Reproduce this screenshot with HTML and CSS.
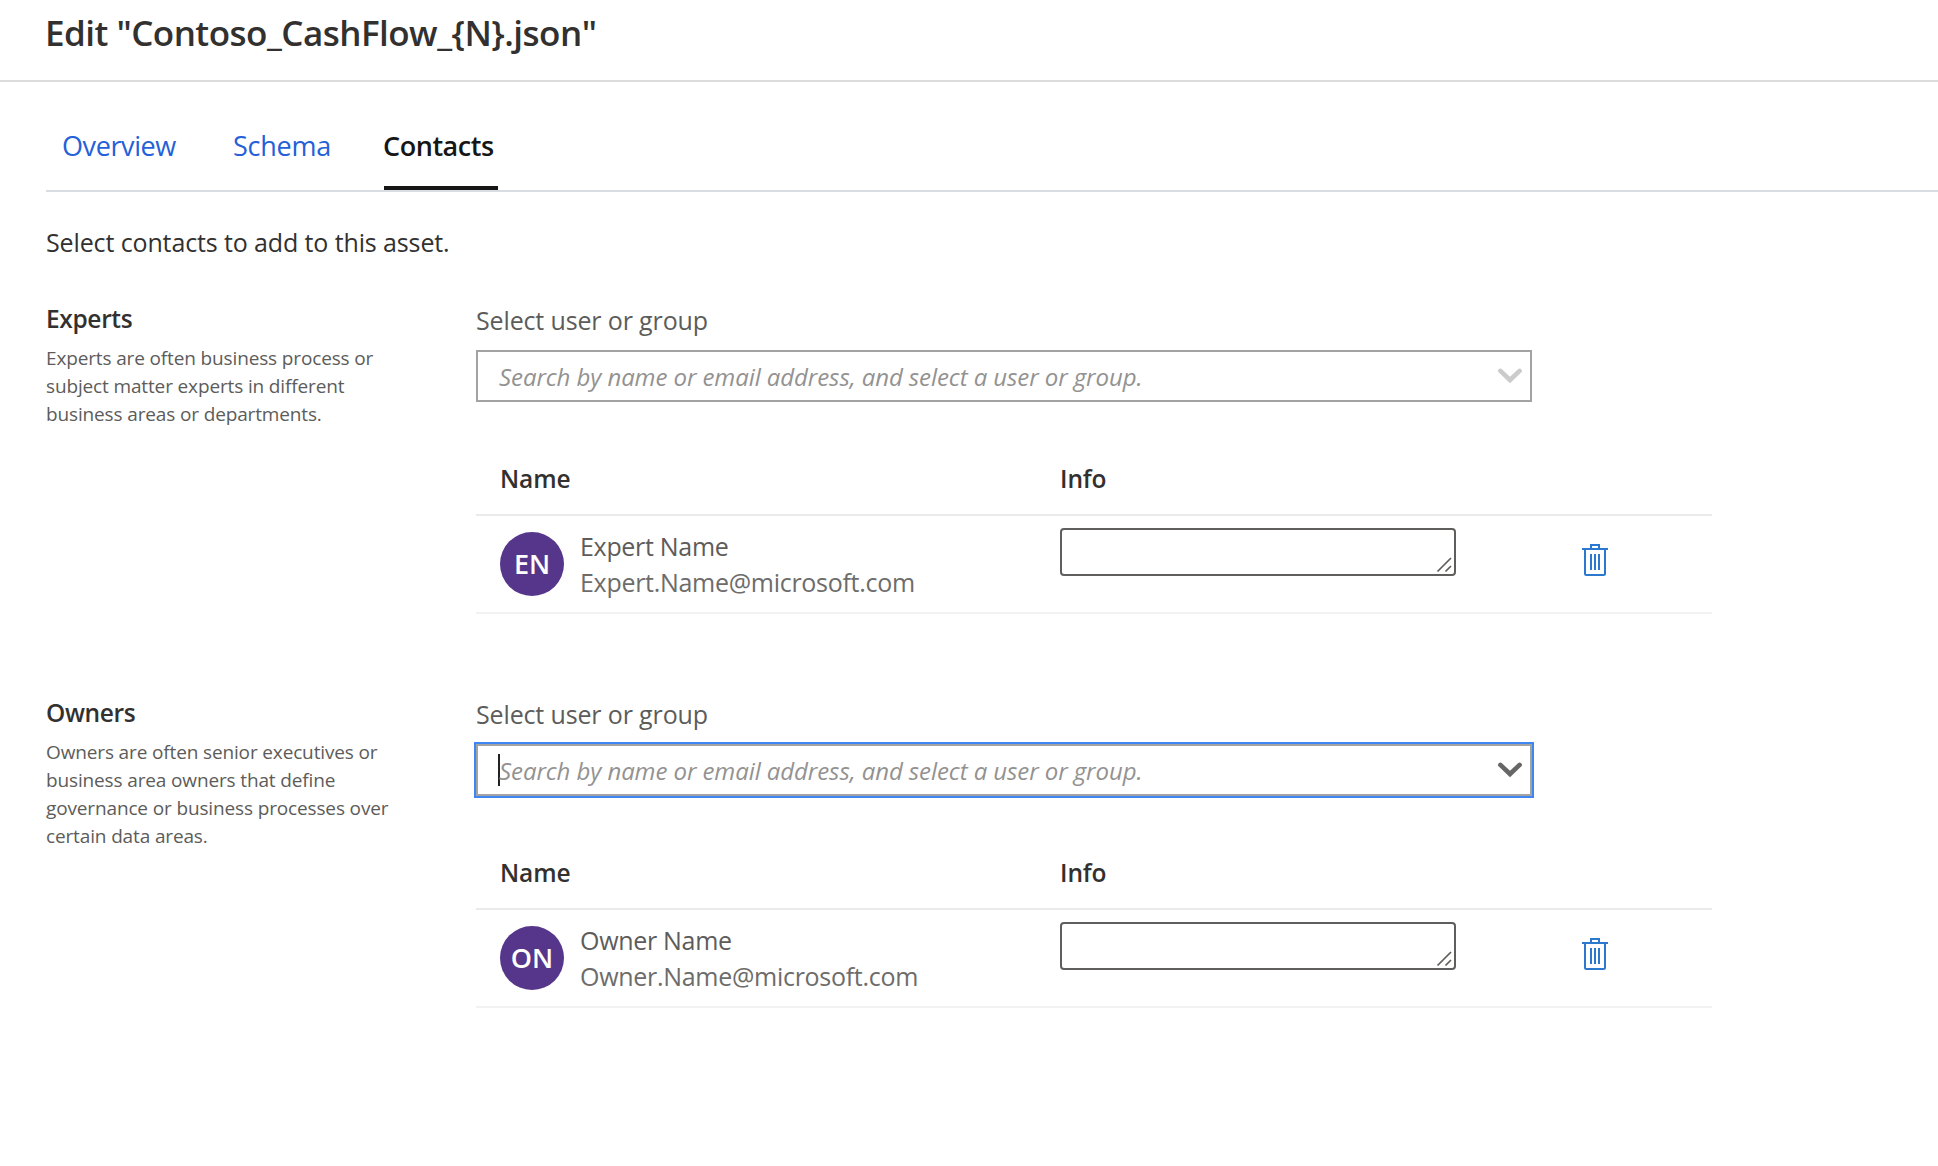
FILE: index.html
```html
<!DOCTYPE html>
<html lang="en">
<head>
<meta charset="utf-8">
<title>Edit asset</title>
<link rel="stylesheet" href="styles.css">
</head>
<body>
<svg class="sprite" aria-hidden="true">
  <symbol id="chevron" viewBox="0 0 24 16"><path d="M2.4 2.9 12 12 21.6 2.9" fill="none" stroke="currentColor" stroke-width="4.6" stroke-linecap="round"/></symbol>
  <symbol id="trash" viewBox="0 0 26 32"><path d="M0 5H26M9 5V1H17V5M3 5V29.5Q3 31 4.5 31H21.5Q23 31 23 29.5V5M9 10V26M13 10V26M17 10V26" fill="none" stroke="currentColor" stroke-width="2"/></symbol>
  <symbol id="grip" viewBox="0 0 16 16"><path d="M1.5 14.5 15 1M9.5 14.5 15 9" fill="none" stroke="currentColor" stroke-width="1.7"/></symbol>
</svg>

<header class="header"><h1>Edit "Contoso_CashFlow_{N}.json"</h1></header>

<main class="main">
  <nav class="tabs">
    <a class="tab overview">Overview</a>
    <a class="tab schema">Schema</a>
    <a class="tab active">Contacts</a>
  </nav>
  <p class="intro">Select contacts to add to this asset.</p>

  <section class="group">
    <div class="about">
      <h2>Experts</h2>
      <p>Experts are often business process or<br>subject matter experts in different<br>business areas or departments.</p>
    </div>
    <div class="content">
      <div class="label">Select user or group</div>
      <div class="picker">
        <span class="placeholder">Search by name or email address, and select a user or group.</span>
        <svg class="chevron"><use href="#chevron"/></svg>
      </div>
      <div class="row head"><div>Name</div><div>Info</div></div>
      <div class="row person">
        <div class="persona">
          <span class="avatar">EN</span>
          <div class="who"><div class="name">Expert Name</div><div class="email">Expert.Name@microsoft.com</div></div>
        </div>
        <div class="info"><svg class="grip"><use href="#grip"/></svg></div>
        <svg class="trash"><use href="#trash"/></svg>
      </div>
    </div>
  </section>

  <section class="group">
    <div class="about">
      <h2>Owners</h2>
      <p>Owners are often senior executives or<br>business area owners that define<br>governance or business processes over<br>certain data areas.</p>
    </div>
    <div class="content">
      <div class="label">Select user or group</div>
      <div class="picker focused">
        <span class="caret"></span>
        <span class="placeholder">Search by name or email address, and select a user or group.</span>
        <svg class="chevron"><use href="#chevron"/></svg>
      </div>
      <div class="row head"><div>Name</div><div>Info</div></div>
      <div class="row person">
        <div class="persona">
          <span class="avatar">ON</span>
          <div class="who"><div class="name">Owner Name</div><div class="email">Owner.Name@microsoft.com</div></div>
        </div>
        <div class="info"><svg class="grip"><use href="#grip"/></svg></div>
        <svg class="trash"><use href="#trash"/></svg>
      </div>
    </div>
  </section>
</main>
</body>
</html>
```
FILE: styles.css
```css
* { box-sizing: border-box; }
body {
  margin: 0;
  min-height: 100vh;
  background: #fff;
  color: #323130;
  font-family: "Open Sans", "Noto Sans", sans-serif;
}
h1, h2, p { margin: 0; }
.sprite { display: none; }

.header {
  height: 82px;
  padding: 1px 0 0 45px;
  border-bottom: 2px solid #dcdcdc;
}
h1 {
  font-size: 35px;
  font-weight: 600;
  line-height: 64px;
  letter-spacing: -0.52px;
}

.main { padding-left: 46px; }
.tabs {
  display: flex;
  height: 110px;
  padding: 44px 0 0 16px;
  border-bottom: 2px solid #d9dde2;
}
.tab {
  height: 64px;
  font-size: 27px;
  line-height: 40px;
  color: #2560d8;
  white-space: nowrap;
}
.overview { width: 171px; letter-spacing: -0.4px; }
.schema { width: 151px; letter-spacing: -0.25px; }
.active {
  width: 114px;
  border-bottom: 4px solid #161616;
  color: #161616;
  font-weight: 600;
  letter-spacing: -0.45px;
  text-indent: -1px;
}
.intro {
  margin-top: 30px;
  font-size: 25px;
  line-height: 40px;
  letter-spacing: -0.12px;
}

.group {
  display: grid;
  grid-template-columns: 430px 1236px;
  margin-top: 40px;
}
.group + .group { margin-top: 82px; }
h2 {
  margin-top: -1px;
  font-size: 24.5px;
  font-weight: 600;
  line-height: 36px;
  letter-spacing: -0.35px;
}
.about p {
  margin-top: 7px;
  font-size: 19px;
  line-height: 28px;
  letter-spacing: -0.14px;
  color: #5d5c5a;
}
.label {
  font-size: 25px;
  line-height: 36px;
  letter-spacing: -0.14px;
  color: #5d5c5a;
}
.picker {
  display: flex;
  align-items: center;
  width: 1056px;
  height: 52px;
  margin-top: 12px;
  padding: 0 8px 0 20px;
  border: 2px solid #a3a3a3;
  color: #cbcbcb;
}
.focused {
  outline: 2px solid #3f86f5;
  color: #666;
}
.caret {
  width: 2px;
  height: 32px;
  margin-right: -2px;
  background: #222;
}
.placeholder {
  flex: 1;
  margin-left: 1px;
  padding-top: 2px;
  font-size: 24px;
  font-style: italic;
  line-height: 36px;
  letter-spacing: -0.08px;
  color: #939291;
}
.chevron { width: 24px; height: 16px; }

.row {
  display: grid;
  grid-template-columns: 560px 522px 1fr;
  padding-left: 24px;
  border-bottom: 2px solid #eaeaea;
}
.head {
  height: 74px;
  margin-top: 40px;
  padding-top: 1px;
  align-items: center;
  font-size: 24.5px;
  font-weight: 600;
  line-height: 36px;
  letter-spacing: -0.1px;
}
.person {
  height: 98px;
  border-color: #f2f2f2;
}
.persona {
  display: flex;
  gap: 16px;
  padding-top: 12px;
}
.avatar {
  display: flex;
  align-items: center;
  justify-content: center;
  width: 64px;
  height: 64px;
  margin-top: 4px;
  padding-bottom: 2px;
  border-radius: 50%;
  background: #56368a;
  color: #fff;
  font-size: 27px;
  font-weight: 600;
}
.who {
  font-size: 25px;
  line-height: 36px;
  color: #5d5c5a;
}
.name { letter-spacing: -0.3px; }
.email { letter-spacing: -0.29px; color: #6d6c6a; }
.info {
  display: flex;
  justify-content: flex-end;
  align-items: flex-end;
  width: 396px;
  height: 48px;
  margin-top: 12px;
  padding: 0 2px 1px 0;
  border: 2px solid #5f5e5d;
  border-radius: 4px;
  color: #5f5e5d;
}
.grip { width: 16px; height: 16px; }
.trash {
  width: 26px;
  height: 32px;
  margin-top: 28px;
  color: #2b78cf;
}
```
